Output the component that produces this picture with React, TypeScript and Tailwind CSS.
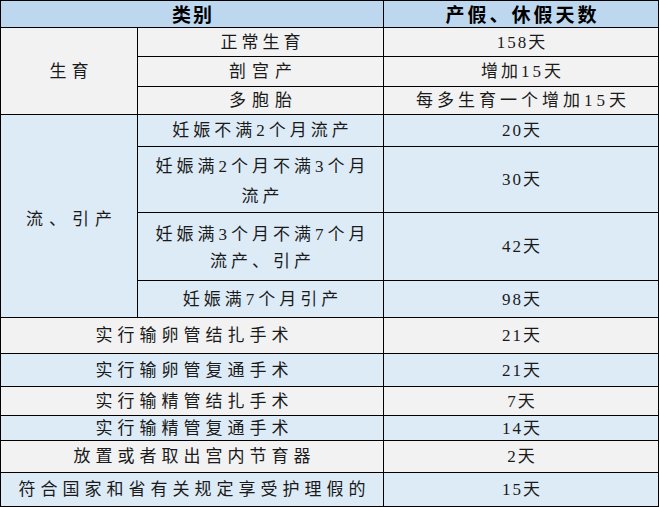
const font = "font-['Liberation_Serif','Noto_Sans_CJK_SC',serif]"

const gray = 'bg-[#f2f2f2]'
const blue = 'bg-[#ddebf7]'

type CellProps = {
  className: string
  text: React.ReactNode
  track?: string
}

function Cell({ className, text, track = 'tracking-[5px] mr-[-5px]' }: CellProps) {
  return (
    <div className={`flex items-center justify-center text-center ${className}`}>
      <span className={track}>{text}</span>
    </div>
  )
}

const num = 'text-[17px] tracking-[2px] mr-[-2px]'

export default function App() {
  return (
    <div className={`w-[659px] ${font} text-[17px] leading-none text-[#1a1a1a]`}>
      <div className="grid grid-cols-[136px_245px_274px] grid-rows-[26px_28px_29px_27px_31px_65px_67px_36px_35px_32px_28px_24px_31px_33px] gap-px border border-black bg-black">
        <Cell
          className="col-span-2 bg-[#bdd7ee] pt-[2px] text-[19px] font-bold text-black"
          text="类别"
          track="tracking-[2px] mr-[-2px]"
        />
        <Cell
          className="bg-[#bdd7ee] pt-[2px] text-[19px] font-bold text-black"
          text="产假、休假天数"
          track="tracking-[3px] mr-[-3px]"
        />

        <Cell className={`row-span-3 ${gray}`} text="生育" />
        <Cell className={gray} text="正常生育" track="tracking-[4px] mr-[-4px]" />
        <Cell className={gray} text="158天" track={num} />
        <Cell className={gray} text="剖宫产" track="tracking-[6px] mr-[-6px]" />
        <Cell className={gray} text="增加15天" track="tracking-[3px] mr-[-3px]" />
        <Cell className={gray} text="多胞胎" track="tracking-[6px] mr-[-6px]" />
        <Cell className={gray} text="每多生育一个增加15天" track="tracking-[4px] mr-[-4px]" />

        <Cell className={`row-span-4 pt-[6px] ${blue}`} text="流、引产" track="tracking-[6px] mr-[-6px]" />
        <Cell className={blue} text="妊娠不满2个月流产" track="tracking-[4px] mr-[-4px]" />
        <Cell className={blue} text="20天" track={num} />
        <Cell
          className={`${blue} leading-[30px] pt-[4px]`}
          text={
            <>
              妊娠满2个月不满3个月
              <br />
              流产
            </>
          }
          track="tracking-[4px] mr-[-4px]"
        />
        <Cell className={blue} text="30天" track={num} />
        <Cell
          className={`${blue} leading-[27px] pt-[2px]`}
          text={
            <>
              妊娠满3个月不满7个月
              <br />
              流产、引产
            </>
          }
          track="tracking-[4px] mr-[-4px]"
        />
        <Cell className={blue} text="42天" track={num} />
        <Cell className={blue} text="妊娠满7个月引产" track="tracking-[4px] mr-[-4px]" />
        <Cell className={blue} text="98天" track={num} />

        <Cell className={`col-span-2 ${gray}`} text="实行输卵管结扎手术" />
        <Cell className={gray} text="21天" track={num} />
        <Cell className={`col-span-2 ${blue}`} text="实行输卵管复通手术" />
        <Cell className={blue} text="21天" track={num} />
        <Cell className={`col-span-2 ${gray}`} text="实行输精管结扎手术" />
        <Cell className={gray} text="7天" track={num} />
        <Cell className={`col-span-2 ${blue}`} text="实行输精管复通手术" />
        <Cell className={blue} text="14天" track={num} />
        <Cell className={`col-span-2 ${gray}`} text="放置或者取出宫内节育器" />
        <Cell className={gray} text="2天" track={num} />
        <Cell className={`col-span-2 ${blue}`} text="符合国家和省有关规定享受护理假的" />
        <Cell className={blue} text="15天" track={num} />
      </div>
    </div>
  )
}
